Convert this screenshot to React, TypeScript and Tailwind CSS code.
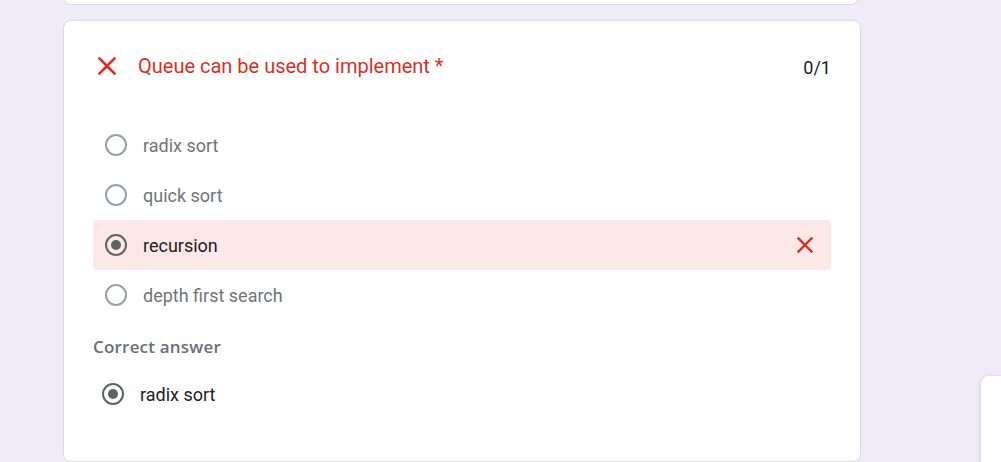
import React from "react";

const XIcon = ({ className = "" }: { className?: string }) => (
  <svg viewBox="0 0 24 24" className={className} fill="#d93025">
    <path d="M19 6.41L17.59 5 12 10.59 6.41 5 5 6.41 10.59 12 5 17.59 6.41 19 12 13.41 17.59 19 19 17.59 13.41 12z" />
  </svg>
);

const Radio = ({ checked }: { checked?: boolean }) => (
  <div
    className={
      checked
        ? "w-[22px] h-[22px] rounded-full border-2 border-[#5f6368] flex items-center justify-center shrink-0"
        : "w-[22px] h-[22px] rounded-full border-2 border-[#9aa0a6] shrink-0"
    }
  >
    {checked && <div className="w-[10px] h-[10px] rounded-full bg-[#5f6368]" />}
  </div>
);

const options = [
  { label: "radix sort" },
  { label: "quick sort" },
  { label: "recursion", selected: true },
  { label: "depth first search" },
];

export default function App() {
  return (
    <div
      className="relative h-[462px] w-[1001px] overflow-hidden bg-[#f0ebf8] pl-[63px]"
      style={{ fontFamily: "Roboto, 'Liberation Sans', sans-serif" }}
    >
      <div className="w-[798px] flex flex-col gap-[15px]">
        <div className="mt-[-100px] h-[105px] w-[796px] rounded-lg border border-[#dadce0] bg-white" />
        <div className="rounded-lg border border-[#dadce0] bg-white px-[29px] pt-[25px] pb-[43px]">
          <div className="flex h-[40px] items-center">
            <div className="ml-[-2px] flex h-[32px] w-[32px] items-center justify-center">
              <XIcon className="w-[32px] h-[32px]" />
            </div>
            <div className="ml-[15px] text-[20px] text-[#d93025]">Queue can be used to implement *</div>
            <div className="ml-auto mt-[2px] text-[18px] text-[#202124]">0/1</div>
          </div>
          <div className="mt-[34px] flex flex-col">
            {options.map((o) => (
              <div
                key={o.label}
                className={
                  o.selected
                    ? "flex h-[50px] items-center rounded bg-[#fce8e6] pl-[12px] pr-[12px]"
                    : "flex h-[50px] items-center pl-[12px] pr-[12px]"
                }
              >
                <Radio checked={o.selected} />
                <span
                  className={
                    o.selected
                      ? "ml-[16px] text-[18px] text-[#202124]"
                      : "ml-[16px] text-[18px] text-[#70757a]"
                  }
                >
                  {o.label}
                </span>
                {o.selected && <XIcon className="ml-auto w-[28px] h-[28px]" />}
              </div>
            ))}
          </div>
          <div
            className="mt-[15px] flex h-[24px] items-center text-[17px] font-semibold tracking-[0.2px] text-[#6b6f74]"
            style={{ fontFamily: "'Open Sans', Roboto, sans-serif" }}
          >
            Correct answer
          </div>
          <div className="mt-[11px] flex h-[48px] items-center pl-[9px]">
            <Radio checked />
            <span className="ml-[16px] text-[18px] text-[#202124]">radix sort</span>
          </div>
        </div>
      </div>
      <div className="absolute left-[981px] top-[376px] h-[200px] w-[60px] rounded-lg bg-white shadow-[0_1px_4px_rgba(0,0,0,0.18)]" />
    </div>
  );
}
